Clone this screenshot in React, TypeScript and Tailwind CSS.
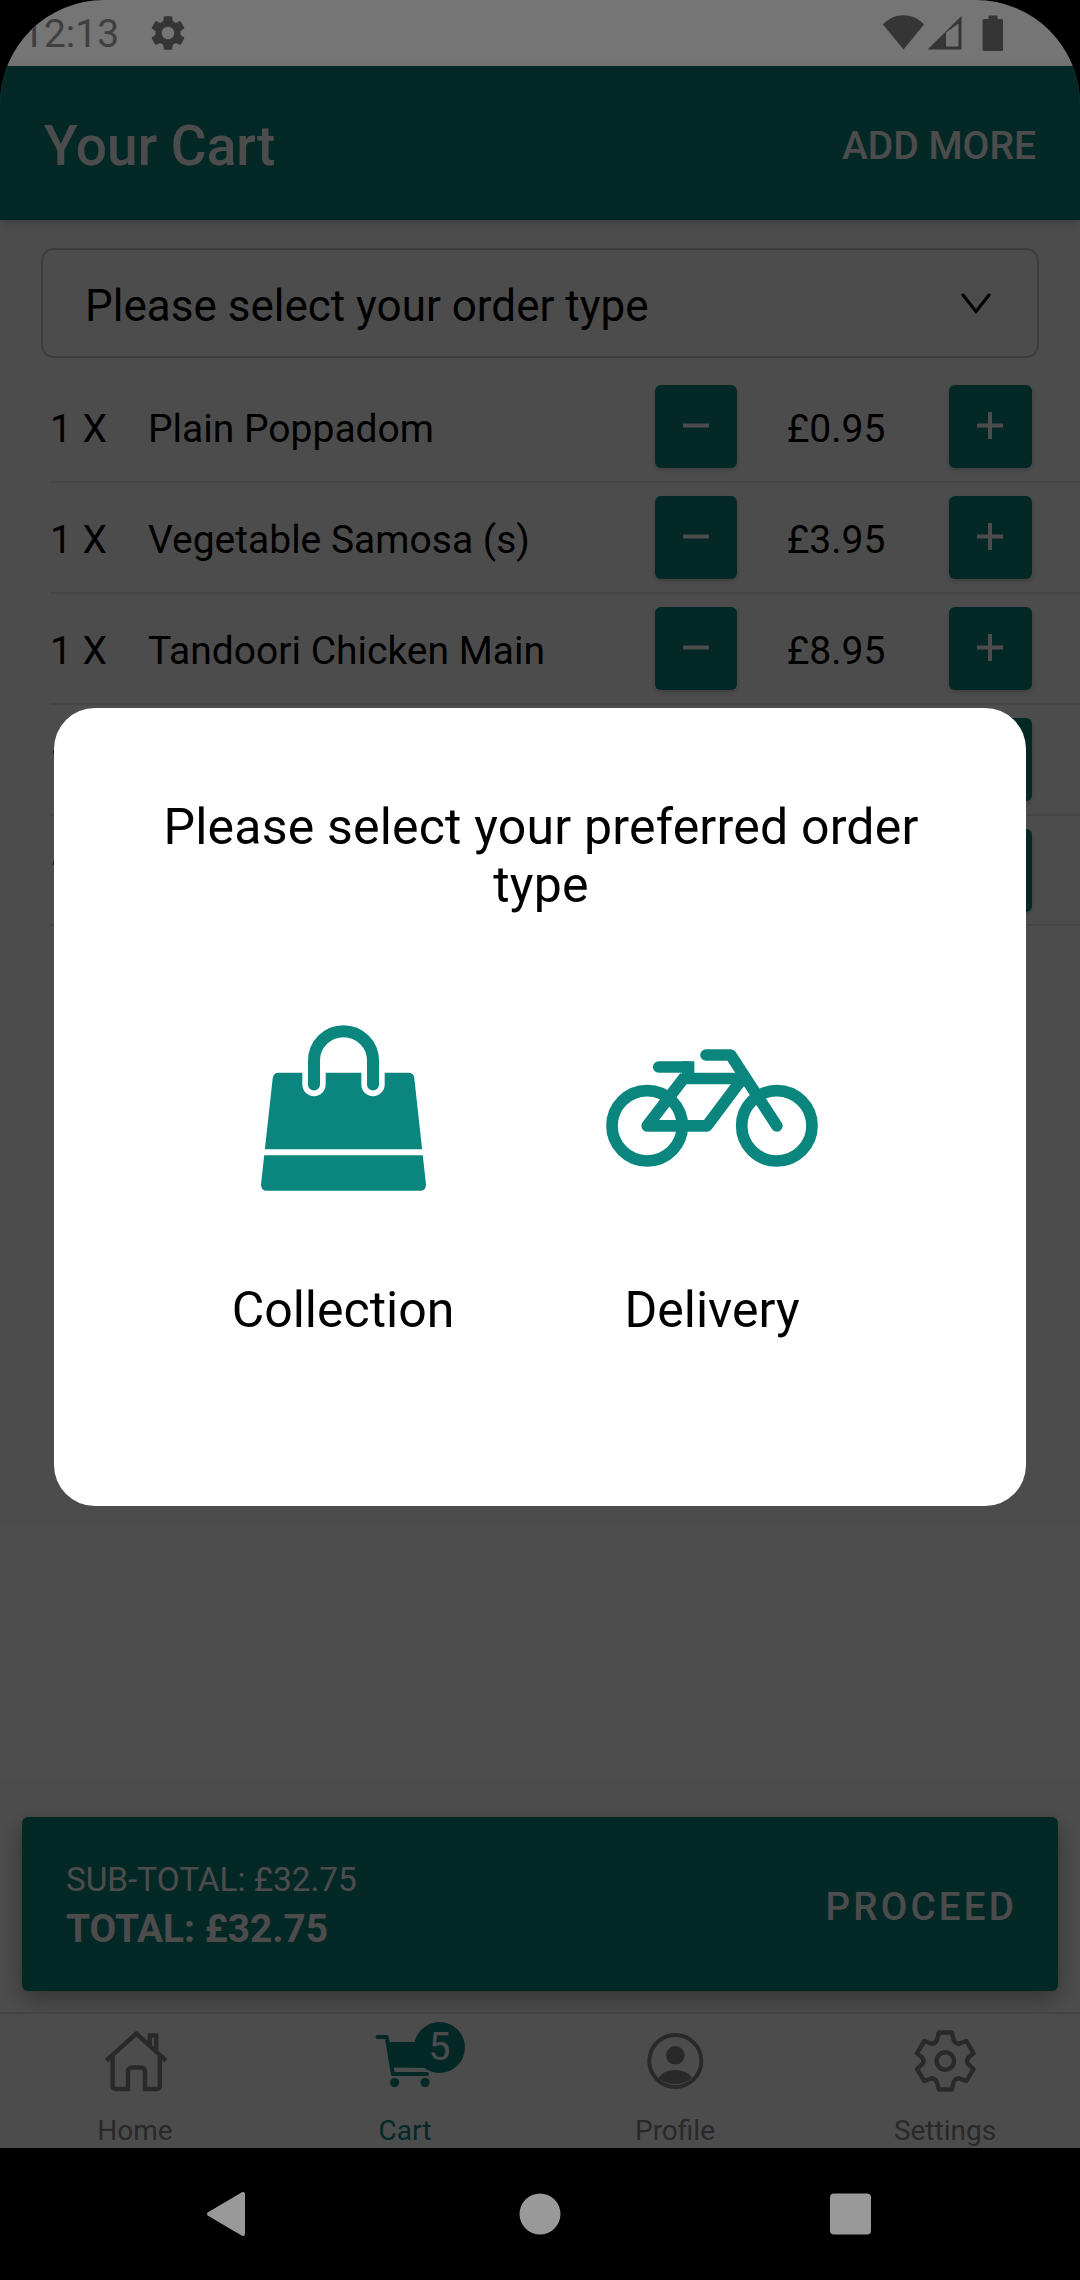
import { MdSettings } from "react-icons/md";

interface CartItem {
  id: number;
  name?: string;
  price?: string;
}

const items: CartItem[] = [
  { id: 1, name: "Plain Poppadom", price: "£0.95" },
  { id: 2, name: "Vegetable Samosa (s)", price: "£3.95" },
  { id: 3, name: "Tandoori Chicken Main", price: "£8.95" },
  { id: 4 },
  { id: 5 },
];

const StatusBar = () => (
  <div className="h-[66px] shrink-0 bg-[#757575] flex items-center text-[#353535]">
    <span className="pl-[22px] w-[147px] text-[39px] leading-none pt-[3px] text-[#3f3f3f]">12:13</span>
    <MdSettings className="size-[42px]" />
    <svg className="ml-auto mr-[77px]" width="120" height="36" viewBox="0 0 120 36" fill="currentColor">
      {/* wifi */}
      <path d="M0 9.500 C11-2.800 30-2.800 41 9.500 L20.500 34.500Z" />
      {/* signal */}
      <path fillRule="evenodd" d="M44.500 34.500 L78.500 1 V34.500Z M63 17.500 V31.500 H75.500 V8.500Z" />
      {/* battery */}
      <path d="M105.500 0.500 h9 v3.500 h4 a2 2 0 0 1 2 2 v28 a2 2 0 0 1 -2 2 h-17 a2 2 0 0 1 -2 -2 v-28 a2 2 0 0 1 2 -2 h4z" />
    </svg>
  </div>
);

const Header = () => (
  <header className="relative z-10 h-[154px] shrink-0 bg-[#0b867f] flex items-center justify-between pl-[44px] pr-[44px] text-white shadow-[0_3px_9px_rgba(0,0,0,0.2)]">
    <h1 className="text-[55px] font-medium leading-none pt-[6px]">Your Cart</h1>
    <button className="text-[39px] font-medium leading-none pt-[7px]">ADD MORE</button>
  </header>
);

const MinusButton = () => (
  <button className="w-[82px] h-[83px] shrink-0 rounded-[6px] bg-[#0b867f] flex items-center justify-center pb-[2px] shadow-[0_2px_5px_rgba(0,0,0,0.2)]">
    <svg width="26" height="27" viewBox="0 0 26 27" fill="none" stroke="white" strokeWidth="4">
      <path d="M0 13.500H26" />
    </svg>
  </button>
);

const PlusButton = () => (
  <button className="w-[83px] h-[83px] shrink-0 rounded-[6px] bg-[#0b867f] flex items-center justify-center pb-[2px] pr-px shadow-[0_2px_5px_rgba(0,0,0,0.2)]">
    <svg width="26" height="27" viewBox="0 0 26 27" fill="none" stroke="white" strokeWidth="4">
      <path d="M0 13.500H26M13 0V27" />
    </svg>
  </button>
);

const CartRow = ({ item }: { item: CartItem }) => (
  <div className="ml-[50px] h-[110.9px] border-b-2 border-[#e6e6e6] flex items-center text-[39px] leading-none text-black">
    <span className="w-[98px] pt-[6px] tracking-[0.4px]">1 X</span>
    <span className="w-[507px] pt-[6px]">{item.name}</span>
    <MinusButton />
    <span className="w-[212px] pt-[6px] pr-[14px] text-center">{item.price}</span>
    <PlusButton />
  </div>
);

const HomeIcon = () => (
  <svg className="relative left-px" width="62" height="62" viewBox="0 0 62 62" fill="none" stroke="currentColor" strokeWidth="4.400">
    <path d="M1.500 30.500L31.300 3.500L61 30.500" strokeLinejoin="round" />
    <path d="M7.600 26V56.500a2.500 2.500 0 0 0 2.500 2.500H23V41.500a4 4 0 0 1 4-4H36a4 4 0 0 1 4 4V59H52.300a2.500 2.500 0 0 0 2.500-2.500V26" />
    <path d="M44.800 15V5.500H51.200V20" />
  </svg>
);

const CartIcon = () => (
  <svg width="62" height="62" viewBox="0 0 62 62" fill="currentColor">
    <path d="M3.500 7H12.700L18.800 44H53" fill="none" stroke="currentColor" strokeWidth="4" strokeLinecap="round" strokeLinejoin="round" />
    <path d="M14 12H62L56 38L18 37.500Z" />
    <circle cx="20.600" cy="52.600" r="4.600" />
    <circle cx="51" cy="52.600" r="4.600" />
  </svg>
);

const ProfileIcon = () => (
  <svg width="62" height="62" viewBox="0 0 62 62" fill="currentColor">
    <circle cx="31.300" cy="31" r="26" fill="none" stroke="currentColor" strokeWidth="4" />
    <circle cx="31.300" cy="25.300" r="9.300" />
    <path d="M14.500 48C20 37.300 42.500 37.300 48 48A26 26 0 0 1 14.500 48Z" />
  </svg>
);

const SettingsIcon = () => (
  <svg width="62" height="62" viewBox="0 0 62 62" fill="none" stroke="currentColor" strokeWidth="4.400" strokeLinejoin="round">
    <path d="M24.800 2.500H37.800L39.800 10.500Q41.500 13.500 45 13.800L52.300 11L59.500 23.200L54 28Q52 31 54 34L59.500 38.800L52.300 51L45 48.200Q41.500 48.500 39.800 51.500L37.800 59.500H24.800L22.800 51.500Q21 48.500 17.500 48.200L10.300 51L3 38.800L8.500 34Q10.500 31 8.500 28L3 23.200L10.300 11L17.500 13.800Q21 13.500 22.800 10.500Z" />
    <circle cx="31.300" cy="31" r="8.700" />
  </svg>
);

const tabs = [
  { label: "Home", icon: <HomeIcon /> },
  { label: "Cart", icon: <CartIcon />, badge: 5 },
  { label: "Profile", icon: <ProfileIcon /> },
  { label: "Settings", icon: <SettingsIcon /> },
];

const TabBar = () => (
  <nav className="relative h-[136px] shrink-0 bg-white border-t-2 border-[#e0e0e0] grid grid-cols-4">
    {tabs.map((tab) => (
      <div
        key={tab.label}
        className={`relative flex flex-col items-center pt-[16px] ${tab.badge ? "text-[#0b867f]" : "text-[#8a8a8a]"}`}
      >
        {tab.icon}
        <span className="mt-[22px] text-[28px] leading-[33px]">{tab.label}</span>
        {tab.badge && (
          <span className="absolute left-[144px] top-[8px] size-[51px] rounded-full bg-[#0b867f] text-white text-[39px] leading-[51px] text-center">
            {tab.badge}
          </span>
        )}
      </div>
    ))}
  </nav>
);

const BagIcon = () => (
  <svg width="165" height="166" viewBox="123 135 495 497" fill="#0b867f">
    <path d="M176 278H565Q582 278 583 295L618 613Q618 632 600 632H141Q123 632 123 613L158 295Q160 278 176 278Z" />
    <path d="M120 516H622" stroke="white" strokeWidth="18" />
    <path d="M282 313V260M459 260V313" stroke="white" strokeWidth="70" strokeLinecap="round" />
    <path d="M282 313V241.500A88.500 88.500 0 0 1 459 241.500V313" fill="none" stroke="#0b867f" strokeWidth="36" strokeLinecap="round" />
  </svg>
);

const BikeIcon = () => (
  <svg width="212" height="118" viewBox="108 207 636 354" fill="none" stroke="#0b867f" strokeWidth="35">
    <circle cx="231.500" cy="437.500" r="105.500" />
    <circle cx="620.500" cy="437.500" r="105.500" />
    <path d="M345 290L231.500 437.500H411L512 302" strokeLinejoin="round" />
    <path d="M266 261H355" strokeLinecap="round" />
    <path d="M335 261H373M335 295.500H515" />
    <path d="M408 225H482L620.500 437.500" strokeLinecap="round" strokeLinejoin="round" />
  </svg>
);

const OrderTypeModal = () => (
  <div className="absolute z-20 left-0 top-[66px] w-full h-[2082px] bg-black/70 flex items-center justify-center">
    <div className="w-[972px] h-[798px] rounded-[41px] bg-white pt-[90px] text-black text-[50px] leading-[58px]">
      <h2 className="pl-[101px] pr-[99px] text-center tracking-[0.2px]">Please select your preferred order type</h2>
      <div className="mt-[111px] pl-[104px] flex">
        <button className="w-[370px] flex flex-col items-center">
          <BagIcon />
          <span className="mt-[90px]">Collection</span>
        </button>
        <button className="w-[368px] flex flex-col items-center">
          <span className="h-[166px] flex items-center">
            <BikeIcon />
          </span>
          <span className="mt-[90px]">Delivery</span>
        </button>
      </div>
    </div>
  </div>
);

const SystemNav = () => (
  <div className="h-[132px] shrink-0 bg-black flex items-center pl-[206px] pb-px">
    <svg width="666" height="46" viewBox="0 0 666 46" fill="#999999">
      <path d="M3 23L37 3V43Z" stroke="#999999" strokeWidth="4" strokeLinejoin="round" />
      <circle cx="334" cy="23" r="20.500" />
      <rect x="624" y="2.500" width="41" height="41" rx="4" />
    </svg>
  </div>
);

const App = () => {
  return (
    <div className="w-[1080px] h-[2280px] bg-black font-[Roboto,sans-serif]">
      <div className="relative h-full flex flex-col overflow-hidden rounded-t-[104px]">
        <StatusBar />
        <Header />

        {/* Cart content */}
        <main className="flex-1 bg-white flex flex-col pt-[28px]">
          <div className="mx-[41px] h-[110px] shrink-0 rounded-[13px] border-[2.5px] border-[#cacaca] flex items-center justify-between pl-[42px] pr-[46px]">
            <span className="pt-[6px] text-[44px] leading-none text-black">Please select your order type</span>
            <svg width="30" height="21" viewBox="0 0 30 21" fill="none" stroke="black" strokeWidth="3" strokeLinecap="round">
              <path d="M2 2L15 18.500L28 2" />
            </svg>
          </div>
          <div className="mt-[14px]">
            {items.map((item) => (
              <CartRow key={item.id} item={item} />
            ))}
          </div>

          {/* Totals */}
          <div className="mt-auto mx-[22px] mb-[21px] h-[174px] rounded-[6px] bg-[#0b867f] pl-[44px] pr-[41px] flex items-center justify-between text-white shadow-[0_8px_22px_rgba(0,0,0,0.33)]">
            <div className="pt-[10px]">
              <p className="text-[33.3px] leading-[40px]">SUB-TOTAL: £32.75</p>
              <p className="text-[38.8px] leading-[58px] font-bold">TOTAL: £32.75</p>
            </div>
            <button className="pt-[6px] text-[38.5px] leading-none font-medium tracking-[3.2px]">PROCEED</button>
          </div>
        </main>

        <TabBar />
        <SystemNav />
        <OrderTypeModal />
      </div>
    </div>
  );
};

export default App;
